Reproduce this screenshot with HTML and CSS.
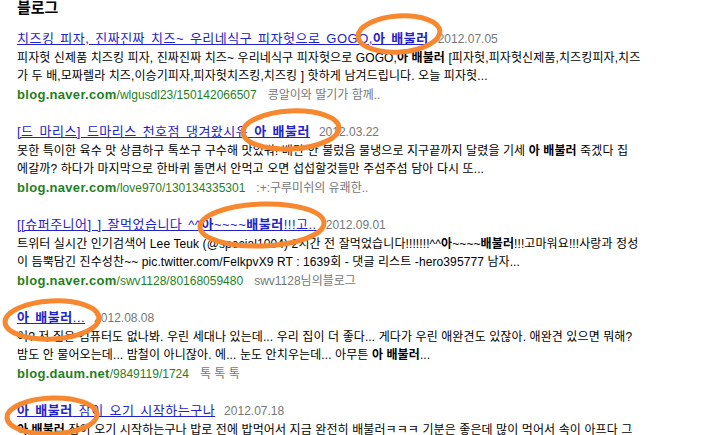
FILE: index.html
```html
<!doctype html>
<html lang="ko">
<head>
	<meta charset="utf-8">
	<title>블로그</title>
	<link rel="stylesheet" href="styles.css">
</head>
<body>
<div class="page">
	<h2 class="section">블로그</h2>

	<div class="item">
		<div class="title"><a href="#">치즈킹 피자, 진짜진짜 치즈~ 우리네식구 피자헛으로 GOGO,<b>아 배불러</b></a><span class="date">2012.07.05</span></div>
		<p class="desc">피자헛 신제품 치즈킹 피자, 진짜진짜 치즈~ 우리네식구 피자헛으로 GOGO,<b>아 배불러</b> [피자헛,피자헛신제품,치즈킹피자,치즈<br>가 두 배,모짜렐라 치즈,이승기피자,피자헛치즈킹,치즈킹 ] 핫하게 남겨드립니다. 오늘 피자헛...</p>
		<div class="src"><span class="url"><b>blog.naver.com</b>/wlgusdl23/150142066507</span><span class="blog">콩알이와 딸기가 함께..</span></div>
	</div>

	<div class="item">
		<div class="title"><a href="#">[드 마리스] 드마리스 천호점 댕겨왔시유 <b>아 배불러</b></a><span class="date">2012.03.22</span></div>
		<p class="desc">못한 특이한 육수 맛 상큼하구 톡쏘구 구수해 맛있쒀! 배만 안 불렀음 물냉으로 지구끝까지 달렸을 기세 <b>아 배불러</b> 죽겠다 집<br>에갈까? 하다가 마지막으로 한바퀴 돌면서 안먹고 오면 섭섭할것들만 주섬주섬 담아 다시 또...</p>
		<div class="src"><span class="url"><b>blog.naver.com</b>/love970/130134335301</span><span class="blog">:+:구루미쉬의 유쾌한..</span></div>
	</div>

	<div class="item">
		<div class="title"><a href="#">[[슈퍼주니어] ] 잘먹었습니다 ^^<b>아</b>~~~~<b>배불러</b>!!!고..</a><span class="date">2012.09.01</span></div>
		<p class="desc">트위터 실시간 인기검색어 Lee Teuk (@special1004) 2시간 전 잘먹었습니다!!!!!!!^^<b>아</b>~~~~<b>배불러</b>!!!고마워요!!!사랑과 정성<br>이 듬뿍담긴 진수성찬~~ pic.twitter.com/FelkpvX9 RT : 1639회 - 댓글 리스트 -hero395777 남자...</p>
		<div class="src"><span class="url"><b>blog.naver.com</b>/swv1128/80168059480</span><span class="blog">swv1128님의블로그</span></div>
	</div>

	<div class="item">
		<div class="title"><a href="#"><b>아 배불러</b>...</a><span class="date">2012.08.08</span></div>
		<p class="desc">어? 저 집은 컴퓨터도 없나봐. 우린 세대나 있는데... 우리 집이 더 좋다... 게다가 우린 애완견도 있잖아. 애완견 있으면 뭐해?<br>밤도 안 물어오는데... 밤철이 아니잖아. 에... 눈도 안치우는데... 아무튼 <b>아 배불러</b>...</p>
		<div class="src"><span class="url"><b>blog.daum.net</b>/9849119/1724</span><span class="blog">톡 톡 톡</span></div>
	</div>

	<div class="item">
		<div class="title"><a href="#"><b>아 배불러</b> 잠이 오기 시작하는구나</a><span class="date">2012.07.18</span></div>
		<p class="desc"><b>아 배불러</b> 잠이 오기 시작하는구나 밥로 전에 밥먹어서 지금 완전히 배불러ㅋㅋㅋ 기분은 좋은데 많이 먹어서 속이 아프다 그</p>
	</div>
</div>

<!-- hand drawn marks on top of the result list -->
<svg class="marks" width="712" height="435" viewBox="0 0 712 435">
	<ellipse cx="399" cy="34" rx="41" ry="18" transform="rotate(-4 399 34)"/>
	<ellipse cx="291" cy="130" rx="48" ry="19" transform="rotate(-3 291 130)"/>
	<ellipse cx="262" cy="225" rx="62" ry="21" transform="rotate(-2 262 225)"/>
	<ellipse cx="52" cy="320" rx="47" ry="19" transform="rotate(-3 52 320)"/>
	<ellipse cx="52" cy="416" rx="45" ry="18" transform="rotate(-2 52 416)"/>
</svg>
</body>
</html>
```

FILE: styles.css
```css
html, body {
	margin: 0;
	background: #fff;
}
body {
	position: relative;
	width: 712px;
	height: 435px;
	overflow: hidden;
	font-family: "Liberation Sans", "Noto Sans CJK KR", sans-serif;
	font-size: 12px;
	line-height: 18.5px;
	color: #000;
}
.page {
	padding: 0 0 0 17px;
}
.section {
	margin: -3px 0 13px;
	font-size: 15px;
	line-height: 20px;
	font-weight: bold;
	font-family: "Noto Sans CJK KR", sans-serif;
}
.item {
	margin-bottom: 19px;
}
.item:last-child {
	margin-bottom: 0;
}
.title a {
	color: #2222cc;
	font-size: 13px;
	letter-spacing: 0.5px;
	word-spacing: 1.8px;
	text-decoration: underline;
}
.date {
	margin-left: 9px;
	color: #777;
}
.desc {
	margin: 0;
	white-space: nowrap;
	letter-spacing: 0.1px;
}
.src {
	white-space: nowrap;
}
.url {
	color: #1f7f1f;
}
.url b {
	font-size: 13px;
	letter-spacing: 0.3px;
}
.blog {
	margin-left: 11px;
	color: #777;
}

.marks {
	position: absolute;
	top: 0;
	left: 0;
	pointer-events: none;
}
.marks ellipse {
	fill: none;
	stroke: #f7882f;
	stroke-width: 5;
}
```
